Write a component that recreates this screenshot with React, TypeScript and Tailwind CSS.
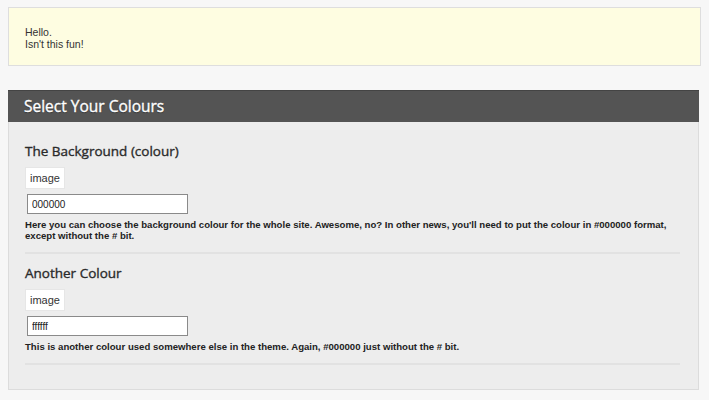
const fields = [
  {
    title: 'The Background (colour)',
    value: '000000',
    help: "Here you can choose the background colour for the whole site. Awesome, no? In other news, you'll need to put the colour in #000000 format, except without the # bit.",
  },
  {
    title: 'Another Colour',
    value: 'ffffff',
    help: 'This is another colour used somewhere else in the theme. Again, #000000 just without the # bit.',
  },
]

function ColourField({ title, value, help }: { title: string; value: string; help: string }) {
  return (
    <div className="border-b-2 border-[#e2e2e2] pb-[11px] mb-[10px]">
      <h3 className="font-['Open_Sans',sans-serif] text-[13.5px] leading-[18px] text-[#2a2a2a] [-webkit-text-stroke:0.35px_#2a2a2a] mb-[5px]">
        {title}
      </h3>
      <div className="inline-block bg-white border border-[#e6e6e6] px-[4px] py-[3px] text-[11px] leading-[14px] text-[#333] font-['Liberation_Sans',Arial,sans-serif]">
        image
      </div>
      <div className="mt-[5px] ml-[2px]">
        <input
          readOnly
          value={value}
          className="block w-[161px] h-[20px] bg-white border border-[#8a8a8a] px-[4px] text-[10px] text-[#222] font-['Liberation_Sans',Arial,sans-serif] outline-none"
        />
      </div>
      <p className="mt-[5px] font-['Liberation_Sans',Arial,sans-serif] font-bold text-[9.6px] leading-[11px] text-[#222] pr-[10px]">
        {help}
      </p>
    </div>
  )
}

export default function App() {
  return (
    <div className="min-h-[400px] bg-[#f7f7f7] px-[8px] pt-[7px] font-['Liberation_Sans',Arial,sans-serif]">
      <div className="h-[59px] bg-[#fefde1] border border-[#dedede] px-[16px] pt-[18px] text-[10.5px] leading-[12px] text-[#333]">
        <p>Hello.</p>
        <p>Isn't this fun!</p>
      </div>

      <div className="mt-[24px] w-[691px]">
        <div className="h-[32px] bg-[#545454] border-t border-[#444] flex items-center px-[16px]">
          <h2 className="font-['Open_Sans',sans-serif] text-[15.5px] text-white [-webkit-text-stroke:0.35px_#fff] [text-shadow:0_1px_1px_rgba(0,0,0,0.4)]">
            Select Your Colours
          </h2>
        </div>
        <div className="bg-[#ededed] border border-t-0 border-[#dcdcdc] pl-[16px] pr-[18px] pt-[20px] pb-[14px]">
          {fields.map((f) => (
            <ColourField key={f.title} {...f} />
          ))}
        </div>
      </div>
    </div>
  )
}
